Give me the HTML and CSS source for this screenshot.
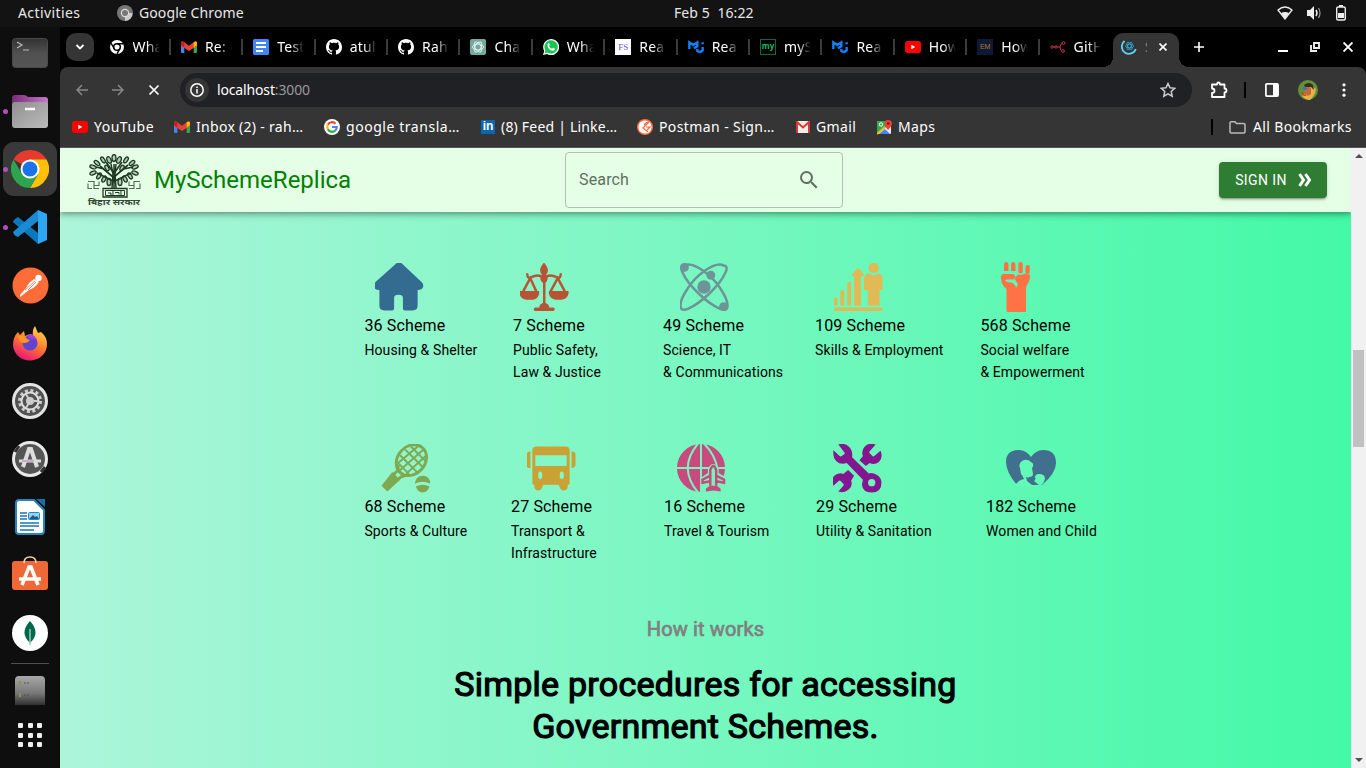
FILE: index.html
```html
<!DOCTYPE html>
<html lang="en">
<head>
<meta charset="utf-8">
<title>MySchemeReplica</title>
<link rel="stylesheet" href="styles.css">
</head>
<body>
<svg class="defs" width="0" height="0">
  <defs>
    <linearGradient id="term" x1="0" y1="0" x2="0" y2="1"><stop offset="0" stop-color="#323232"/><stop offset=".5" stop-color="#505050"/><stop offset="1" stop-color="#555"/></linearGradient>
    <linearGradient id="files" x1="0" y1="0" x2="1" y2="1"><stop offset="0" stop-color="#8f8f8f"/><stop offset="1" stop-color="#bcbcbc"/></linearGradient>
    <linearGradient id="purple"><stop offset="0" stop-color="#7b2c78"/><stop offset="1" stop-color="#c678cd"/></linearGradient>
    <linearGradient id="fox" x1=".8" y1="0" x2=".3" y2="1"><stop offset="0" stop-color="#ffe14c"/><stop offset=".5" stop-color="#ff7b2e"/><stop offset="1" stop-color="#e6127b"/></linearGradient>
    <linearGradient id="drive" x1="0" y1="0" x2="0" y2="1"><stop offset="0" stop-color="#a8a8a8"/><stop offset=".6" stop-color="#777"/><stop offset="1" stop-color="#303030"/></linearGradient>
    <symbol id="gmail" viewBox="0 0 24 18"><path d="M0 3v13q0 2 2 2h3V7z" fill="#4285f4"/><path d="M24 3v13q0 2-2 2h-3V7z" fill="#34a853"/><path d="M0 2.500Q1-1 4 1l8 6 8-6q3-2 4 1.500V7L12 15 0 7z" fill="#ea4335"/><path d="M19 1.700Q24-1 24 3v3l-5 4z" fill="#fbbc04"/><path d="M5 1.700Q0-1 0 3v3l5 4z" fill="#c5221f"/></symbol>
    <symbol id="youtube" viewBox="0 0 24 18"><rect width="24" height="18" rx="4" fill="#f00"/><path d="M9.500 5.500v7l6-3.500z" fill="#fff"/></symbol>
    <symbol id="github" viewBox="0 0 16 16"><path fill="#fff" d="M8 0C3.580 0 0 3.580 0 8c0 3.540 2.290 6.530 5.470 7.590.4.070.55-.17.55-.38 0-.19-.01-.82-.01-1.490-2.010.37-2.530-.49-2.690-.94-.09-.23-.48-.94-.82-1.130-.28-.15-.68-.52-.01-.53.63-.01 1.080.58 1.230.82.72 1.210 1.870.87 2.330.66.07-.52.28-.87.51-1.070-1.780-.2-3.640-.89-3.640-3.950 0-.87.31-1.590.82-2.150-.08-.2-.36-1.020.08-2.120 0 0 .67-.21 2.200.82.64-.18 1.320-.27 2-.27s1.360.09 2 .27c1.530-1.040 2.200-.82 2.200-.82.44 1.100.16 1.920.08 2.120.51.56.82 1.270.82 2.150 0 3.070-1.870 3.750-3.650 3.950.29.25.54.73.54 1.480 0 1.070-.01 1.930-.01 2.200 0 .21.15.46.55.38A8 8 0 0 0 16 8c0-4.420-3.580-8-8-8z"/></symbol>
    <symbol id="mui" viewBox="0 0 24 20"><path d="M2 13V3l6 4 6-4v6l-5 3M14 13v3q4 3 8-1v-5M22 3v3" fill="none" stroke="#0a84ff" stroke-width="3.500"/></symbol>
    <symbol id="chrome" viewBox="0 0 48 48"><path d="M24 24 3.200 12A24 24 0 0 1 44.800 12z" fill="#e33b2e"/><path d="M24 12H44.800A24 24 0 0 1 24 48l10.400-18z" fill="#ffc107"/><path d="M13.600 30 3.200 12A24 24 0 0 0 24 48l10.400-18z" fill="#2da44e"/><circle cx="24" cy="24" r="12" fill="#fff"/><circle cx="24" cy="24" r="9.500" fill="#1a73e8"/></symbol>
  </defs>
</svg>

<header class="topbar">
  <span class="activities">Activities</span>
  <svg class="app-icon" width="16" height="16" viewBox="0 0 16 16"><circle cx="8" cy="8" r="8" fill="#777"/><path d="M8 8h7.500A8 8 0 0 1 8 16z" fill="#ccc"/><circle cx="8" cy="8" r="4.200" fill="#ddd"/><circle cx="8" cy="8" r="3" fill="#777"/></svg>
  <span class="app-name">Google Chrome</span>
  <span class="clock">Feb 5&nbsp; 16:22</span>
  <span class="status">
    <svg width="16" height="14" viewBox="0 0 16 14"><path d="M1 4Q8-2 15 4L8 13z" fill="none" stroke="#eee" stroke-width="1.300"/><path d="M4 7q4-2 8 0l-4 6z" fill="#eee"/></svg>
    <svg width="16" height="14" viewBox="0 0 16 14"><path d="M1 4h3l4-4v14l-4-4H1z" fill="#eee"/><path d="M10 4q2 3 0 6" fill="none" stroke="#eee" stroke-width="1.500"/><path d="M12.500 2q3 5 0 10" fill="none" stroke="#999" stroke-width="1.200"/></svg>
    <svg width="12" height="16" viewBox="0 0 12 16"><path d="M4 0h4v2H4z" fill="#eee"/><rect x="1.700" y="2" width="8.600" height="13" rx="1.500" fill="none" stroke="#eee" stroke-width="1.400"/><path d="M3 8h6v5H3z" fill="#eee"/></svg>
  </span>
</header>

<div class="desktop">
  <nav class="dock">
    <span class="dock-item"><svg width="36" height="30" viewBox="0 0 36 30"><rect x=".5" y=".5" width="35" height="29" rx="3" fill="url(#term)" stroke="#4a4a4a"/><path d="m5 4 5 3-5 3M11 12h6" fill="none" stroke="#bbb" stroke-width="1.200"/></svg></span>
    <span class="dock-item running"><svg width="36" height="33" viewBox="0 0 36 33"><path d="M0 3q0-3 3-3h9q2 0 4 2h17q3 0 3 3v8H0z" fill="url(#purple)"/><rect y="7" width="36" height="26" rx="3" fill="url(#files)"/><path d="M13 14h10" stroke="#fff" stroke-width="2.500"/></svg></span>
    <span class="dock-item running active"><svg width="38" height="38"><use href="#chrome"/></svg></span>
    <span class="dock-item running"><svg width="34" height="34" viewBox="0 0 34 34"><path d="M5 7 25 23v11L0 12q0-2 5-5z" fill="#0b78bd"/><path d="M25 0v11L5 27q-4-1-5-5z" fill="#1b8ad3"/><path d="m25 0 9 4v26l-9 4z" fill="#2da6f3"/></svg></span>
    <span class="dock-item"><svg width="37" height="37" viewBox="0 0 37 37"><circle cx="18.500" cy="18.500" r="18" fill="#ff6c37"/><circle cx="26.500" cy="11" r="3.200" fill="#fff"/><path d="m22 12 5 3q-4 6-10 8l-5 4-4 3v-2l6-7q3-6 8-9z" fill="#fff"/><path d="m13 23 10-9M16 23l8-8" stroke="#ff6c37" stroke-width=".8"/></svg></span>
    <span class="dock-item"><svg width="36" height="36" viewBox="0 0 36 36"><path d="M6 7 8 10l4-4 1 5q5-3 8-1-1-5 2-9l3 7 3-1q6 5 6 12a17 16 0 0 1-34 1Q1 12 6 7z" fill="url(#fox)"/><circle cx="18" cy="18" r="7.500" fill="#6044d0"/><path d="M6 11q7-1 9 3l3 1q-2 3-6 3-5 0-6-7z" fill="#ff9620"/><path d="M15 10q7-2 10 5-5-2-7-1z" fill="#a43ce8"/></svg></span>
    <span class="dock-item"><svg width="36" height="36" viewBox="0 0 36 36"><circle cx="18" cy="18" r="16.500" fill="#525252" stroke="#e4e4e4" stroke-width="3"/><circle cx="18" cy="18" r="10.500" fill="none" stroke="#ccc" stroke-width="3" stroke-dasharray="3 2.500"/><circle cx="18" cy="18" r="8.500" fill="none" stroke="#ddd" stroke-width="2"/><circle cx="18" cy="18" r="4" fill="#ccc"/><path d="m18 18-4-7m4 7h8m-8 0-4 7" stroke="#ccc" stroke-width="2"/></svg></span>
    <span class="dock-item"><svg width="36" height="36" viewBox="0 0 36 36"><circle cx="18" cy="18" r="16.500" fill="#555" stroke="#e9e9e9" stroke-width="3"/><path d="m3 11 4-6M29 31l4-5" stroke="#333" stroke-width="3"/><path d="m11 26 6-18h2l6 18" fill="none" stroke="#ddd" stroke-width="4"/><path d="M7 20h22" stroke="#ddd" stroke-width="3"/><path d="M10 20h12" stroke="#b87ab8"/></svg></span>
    <span class="dock-item"><svg width="30" height="36" viewBox="0 0 30 36"><path d="M4 1h15l10 10v21q0 3-3 3H4q-3 0-3-3V4q0-3 3-3z" fill="#fff" stroke="#2485bf" stroke-width="2"/><path d="M21 0h9v8z" fill="#1b6fa8"/><path d="M5 14h7M5 17h7M5 20h7M5 24h19M5 27h19M5 31h14" stroke="#1b75b5" stroke-width="1.300"/><rect x="13.500" y="13.500" width="11" height="7" rx="1" fill="#9bd0ef" stroke="#2485bf"/><path d="m14 20 4-4 2 2 2-1 2 3z" fill="#175c8e"/></svg></span>
    <span class="dock-item store"><svg width="36" height="34" viewBox="0 0 36 34"><rect y="5" width="36" height="29" rx="3" fill="#ee6936"/><path d="M12 7q0-6 6-6t6 6" fill="none" stroke="#efd6a5" stroke-width="1.600"/><path d="m10 29 7-18h2l7 18" fill="none" stroke="#fff" stroke-width="3.500"/><path d="M7 23h22" stroke="#fff" stroke-width="3.500"/></svg></span>
    <span class="dock-item"><svg width="36" height="36" viewBox="0 0 36 36"><circle cx="18" cy="18" r="18" fill="#fff"/><path d="M18 6q11 12 0 22-11-10 0-22z" fill="#00684a"/><path d="M18 14v16" stroke="#9cc5b5" stroke-width="1.500"/></svg></span>
    <span class="dock-rule"></span>
    <svg class="dock-drive" width="30" height="29" viewBox="0 0 30 29"><path d="M0 29V4q0-4 4-4h22q4 0 4 4v25z" fill="url(#drive)"/><path d="M9 7h1.500M12 7h1.500M9 19h1.500M12 19h1.500" stroke="#444"/><path d="M5 5v4M5 17v4" stroke="#84954d" stroke-width="2"/></svg>
    <span class="dock-grid"><i></i><i></i><i></i><i></i><i></i><i></i><i></i><i></i><i></i></span>
  </nav>

  <main class="browser">
    <div class="tabstrip">
      <span class="tab-search"><svg width="10" height="8" viewBox="0 0 10 8"><path d="m1.500 2 3.500 3.500L8.500 2" fill="none" stroke="#fff" stroke-width="1.800"/></svg></span>
      <div class="tabs">
        <span class="tab"><svg width="16" height="16" viewBox="0 0 16 16"><circle cx="8" cy="8" r="7" fill="#fff"/><circle cx="8" cy="8" r="3.300" fill="#fff" stroke="#000" stroke-width="1.500"/><path d="M8 4.700h6.500M5.200 9.700 2 4M10.800 9.700 8 15" stroke="#000" stroke-width="1.400"/></svg><b>Wha</b></span>
        <span class="tab"><svg width="16" height="12"><use href="#gmail"/></svg><b>Re: N</b></span>
        <span class="tab"><svg width="16" height="16" viewBox="0 0 16 16"><rect width="16" height="16" rx="1.500" fill="#4285f4"/><path d="M3 4h10M3 8h10M3 12h7" stroke="#fff" stroke-width="1.800"/></svg><b>Test</b></span>
        <span class="tab"><svg width="16" height="16"><use href="#github"/></svg><b>atul</b></span>
        <span class="tab"><svg width="16" height="16"><use href="#github"/></svg><b>Rah</b></span>
        <span class="tab"><svg width="16" height="16" viewBox="0 0 16 16"><rect width="16" height="16" rx="2" fill="#74aa9c"/><g fill="none" stroke="#e6f4ef" stroke-width=".9"><ellipse cx="8" cy="8" rx="5.500" ry="3"/><ellipse cx="8" cy="8" rx="5.500" ry="3" transform="rotate(60 8 8)"/><ellipse cx="8" cy="8" rx="5.500" ry="3" transform="rotate(120 8 8)"/></g></svg><b>Cha</b></span>
        <span class="tab"><svg width="16" height="16" viewBox="0 0 16 16"><path d="M0 16 1.200 12A8 8 0 1 1 4 14.900z" fill="#fff"/><path d="m1.500 14.500.9-3a6.700 6.700 0 1 1 2.100 2.100z" fill="#1bc553"/><path d="M5 4.500q1-1.200 1.500.5l.3 1-.8 1q1 2 3 2.800l1-1 2 1q0 2-2.300 2Q5 11 4.500 6z" fill="#fff"/></svg><b>Wha</b></span>
        <span class="tab"><i class="fav fav-fs">FS</i><b>Rea</b></span>
        <span class="tab"><svg width="16" height="14"><use href="#mui"/></svg><b>Rea</b></span>
        <span class="tab"><i class="fav fav-my">my</i><b>myS</b></span>
        <span class="tab"><svg width="16" height="14"><use href="#mui"/></svg><b>Rea</b></span>
        <span class="tab"><svg width="16" height="12"><use href="#youtube"/></svg><b>How</b></span>
        <span class="tab"><i class="fav fav-em">EM</i><b>How</b></span>
        <span class="tab last"><svg width="16" height="14" viewBox="0 0 16 14"><path d="M1 7h9m0 0q0-4 4-4m-4 4q0 4 3 4" fill="none" stroke="#c4304f"/><g fill="#000" stroke="#c4304f"><circle cx="2" cy="7" r="1.200"/><circle cx="6" cy="7" r="1.200"/><circle cx="13.500" cy="3" r="1.400"/><circle cx="13" cy="11" r="1.400"/></g></svg><b>GitH</b></span>
      </div>
      <div class="tab-active">
        <svg width="16" height="16" viewBox="0 0 16 16"><path d="M3.500 2A7.200 7.200 0 1 0 14.800 10" fill="none" stroke="#5ed3f3" stroke-width="1.800"/><circle cx="8.500" cy="7" r="4.500" fill="#16435a"/><g fill="none" stroke="#4aa9c6" stroke-width=".7"><ellipse cx="8.500" cy="7" rx="4.200" ry="1.800"/><ellipse cx="8.500" cy="7" rx="4.200" ry="1.800" transform="rotate(60 8.500 7)"/><ellipse cx="8.500" cy="7" rx="4.200" ry="1.800" transform="rotate(120 8.500 7)"/></g></svg>
        <b class="sliver">S</b>
        <svg width="8" height="8" viewBox="0 0 8 8"><path d="m.5.5 7 7m0-7-7 7" stroke="#fff" stroke-width="1.600"/></svg>
      </div>
      <svg class="new-tab" width="10" height="10" viewBox="0 0 10 10"><path d="M5 0v10M0 5h10" stroke="#fff" stroke-width="1.600"/></svg>
      <span class="window-controls">
        <svg width="10" height="10" viewBox="0 0 10 10"><path d="M0 9h10" stroke="#fff" stroke-width="2"/></svg>
        <svg width="10" height="10" viewBox="0 0 10 10"><path d="M4 1h5v5H4zM1 3v6h6" fill="none" stroke="#eee" stroke-width="1.900"/></svg>
        <svg width="10" height="10" viewBox="0 0 10 10"><path d="m.5.500 9 9m0-9-9 9" stroke="#fff" stroke-width="1.900"/></svg>
      </span>
    </div>

    <div class="toolbar">
      <svg class="nav-icon" width="12" height="12" viewBox="0 0 12 12"><path d="M12 6H1m5-5L1 6l5 5" fill="none" stroke="#888" stroke-width="1.500"/></svg>
      <svg class="nav-icon" width="12" height="12" viewBox="0 0 12 12"><path d="M0 6h11M6 1l5 5-5 5" fill="none" stroke="#888" stroke-width="1.500"/></svg>
      <svg class="nav-icon" width="12" height="12" viewBox="0 0 12 12"><path d="m1.500 1.500 9 9m0-9-9 9" stroke="#fff" stroke-width="1.700"/></svg>
      <div class="omnibox">
        <span class="site-info"><svg width="14" height="14" viewBox="0 0 14 14"><circle cx="7" cy="7" r="6.200" fill="none" stroke="#fff" stroke-width="1.500"/><path d="M7 6v4.500M7 3.500V5" stroke="#fff" stroke-width="1.500"/></svg></span>
        <span class="url">localhost<em>:3000</em></span>
        <svg width="16" height="16" viewBox="0 0 16 16"><path d="m8 1.500 2 4.300 4.700.5-3.500 3.200 1 4.700L8 11.800l-4.200 2.400 1-4.700L1.300 6.300 6 5.800z" fill="none" stroke="#ccc" stroke-width="1.500"/></svg>
      </div>
      <svg class="ext" width="18" height="18" viewBox="0 0 18 18"><path d="M2 3.500h5q0-2 1.500-2t1.500 2h4.500v4q2 0 2 2t-2 2v4.500H2V12q2.500 0 2.500-2.200T2 7.500z" fill="none" stroke="#fff" stroke-width="1.800" stroke-linejoin="round"/></svg>
      <span class="divider"></span>
      <svg class="panel" width="14" height="14" viewBox="0 0 14 14"><rect x=".9" y=".9" width="12.200" height="12.200" rx="1" fill="none" stroke="#fff" stroke-width="1.700"/><path d="M8 1h5v12H8z" fill="#fff"/></svg>
      <svg class="avatar" width="20" height="20" viewBox="0 0 20 20"><circle cx="10" cy="10" r="10" fill="#5e9435"/><path d="M4 16q5-3 5-6l5-4 4 3q-1 7-6 11-5 0-8-4z" fill="#e7b048"/><path d="M6 5q5-4 9 0l1 5-3-3H7z" fill="#3e2a22"/><path d="m7 7 6 1v6l-3 2-4-3z" fill="#bf6a3c"/><path d="m5 8 4 1" stroke="#3f67d8" stroke-width="2"/><path d="M4 12q1 4 4 3" stroke="#e3372a" stroke-width="1.500" fill="none"/></svg>
      <svg class="kebab" width="4" height="14" viewBox="0 0 4 14"><g fill="#fff"><circle cx="2" cy="1.800" r="1.600"/><circle cx="2" cy="7" r="1.600"/><circle cx="2" cy="12.200" r="1.600"/></g></svg>
    </div>

    <div class="bookmarks">
      <span class="bm bm-yt"><svg width="16" height="12"><use href="#youtube"/></svg><b>YouTube</b></span>
      <span class="bm bm-in"><svg width="16" height="12"><use href="#gmail"/></svg><b>Inbox (2) - rah…</b></span>
      <span class="bm bm-gt"><svg width="16" height="16" viewBox="0 0 16 16"><circle cx="8" cy="8" r="8" fill="#fff"/><g fill="none" stroke-width="2.200"><path d="M11.500 4.700A4.800 4.800 0 0 0 3.800 5.800" stroke="#ea4335"/><path d="M3.800 5.800a4.800 4.800 0 0 0 0 4.400" stroke="#fbbc05"/><path d="M3.800 10.200a4.800 4.800 0 0 0 7.400 1.400" stroke="#34a853"/><path d="M11.200 11.600A4.800 4.800 0 0 0 12.800 8H8" stroke="#4285f4"/></g></svg><b>google transla…</b></span>
      <span class="bm bm-li"><i class="fav-in">in</i><b>(8) Feed | Linke…</b></span>
      <span class="bm bm-pm"><svg width="16" height="16" viewBox="0 0 16 16"><circle cx="8" cy="8" r="7.300" fill="#fff" stroke="#ff6c37" stroke-width="1.400"/><path d="M12 3 6 9l5 4M12 3q-3 0-5 3M9 8l4 0-3 3" fill="none" stroke="#f26b3a" stroke-width="1.200"/></svg><b>Postman - Sign…</b></span>
      <span class="bm bm-gm"><svg width="14" height="12" viewBox="0 0 14 12"><rect width="14" height="12" rx="1" fill="#eee"/><path d="M1 12V1l6 5.500L13 1v11" fill="none" stroke="#d93a30" stroke-width="2"/></svg><b>Gmail</b></span>
      <span class="bm bm-mp"><svg width="15" height="15" viewBox="0 0 15 15"><rect y="1" width="14" height="13" rx="1" fill="#e8eaed"/><path d="M0 2q0-1 1-1h8v6L1 14H0z" fill="#34a853"/><path d="m0 14 8-7" stroke="#fbbc04" stroke-width="2"/><path d="m2 14 6-5 5 5z" fill="#4285f4"/><circle cx="4" cy="4.500" r="1.700" fill="none" stroke="#fff"/><path d="M11 0q4 0 4 3.500Q15 6 11 10 7.500 6 7.500 3.500 7.500 0 11 0z" fill="#ea4335"/><circle cx="11.200" cy="3.500" r="1.300" fill="#811"/></svg><b>Maps</b></span>
      <span class="divider bm-divider"></span>
      <span class="bm bm-all"><svg width="17" height="13" viewBox="0 0 17 13"><path d="M1 2q0-1.200 1.200-1.200H6L7.500 2.500h7.300Q16 2.500 16 3.700v7.100q0 1.200-1.200 1.200H2.200Q1 12 1 10.800z" fill="none" stroke="#bbb" stroke-width="1.500"/></svg><b>All Bookmarks</b></span>
    </div>

    <div class="viewport">
      <div class="page">
        <header class="site-header">
          <svg class="emblem" width="54" height="52" viewBox="0 0 54 52">
            <g fill="none" stroke="#1d3a20" stroke-width="1.300">
              <path d="M25 34 26 20 24 10M29 34 28 20l1-10M27 34V10" stroke-width="1.500"/>
              <path d="M26 23 13 12M27 23l14-12M26 27 10 19M28 27l16-8M26 18l-7-10M28 18l7-10M17 15 9 13M37 15l9-2" stroke-width="1.700"/>
              <g fill="#1d3a2040"><ellipse cx="27" cy="4" rx="2" ry="3.500"/><ellipse cx="22" cy="6" rx="2" ry="3.500" transform="rotate(-25 22 6)"/><ellipse cx="32" cy="6" rx="2" ry="3.500" transform="rotate(25 32 6)"/><ellipse cx="16" cy="6" rx="1.700" ry="3.300" transform="rotate(-35 16 6)"/><ellipse cx="39" cy="6" rx="1.700" ry="3.300" transform="rotate(35 39 6)"/><ellipse cx="10" cy="9" rx="1.700" ry="3.300" transform="rotate(-50 10 9)"/><ellipse cx="45" cy="9" rx="1.700" ry="3.300" transform="rotate(50 45 9)"/><ellipse cx="6" cy="13" rx="1.700" ry="3.300" transform="rotate(-70 6 13)"/><ellipse cx="48" cy="13" rx="1.700" ry="3.300" transform="rotate(70 48 13)"/><ellipse cx="6" cy="19" rx="1.700" ry="3.300" transform="rotate(70 6 19)"/><ellipse cx="48" cy="19" rx="1.700" ry="3.300" transform="rotate(-70 48 19)"/><ellipse cx="12" cy="22" rx="1.700" ry="3.300" transform="rotate(35 12 22)"/><ellipse cx="43" cy="22" rx="1.700" ry="3.300" transform="rotate(-35 43 22)"/><ellipse cx="17" cy="25" rx="1.700" ry="3.300" transform="rotate(30 17 25)"/><ellipse cx="38" cy="25" rx="1.700" ry="3.300" transform="rotate(-30 38 25)"/><ellipse cx="20" cy="14" rx="1.700" ry="3" transform="rotate(-30 20 14)"/><ellipse cx="35" cy="14" rx="1.700" ry="3" transform="rotate(30 35 14)"/><ellipse cx="22" cy="28" rx="2" ry="3.700"/><ellipse cx="33" cy="28" rx="2" ry="3.700"/></g>
              <path d="M16 34.500h24v8.500H16z" stroke-width="1.300"/>
              <path d="M18.500 36.500h19v5h-19zM21 39h3v2M26 37v4M28 38.500h4v2M34 37v4" stroke-width="1"/>
              <path d="M1 27.500h6v4h5v-4M12 34.500H7v-3M1 29.500v5h4M53 27.500h-6v4h-5v-4M42 34.500h5v-3M53 29.500v5h-4" stroke-width="1.100" opacity=".75"/>
            </g>
            <text x="1" y="50.500" textLength="52" lengthAdjust="spacingAndGlyphs" class="emblem-text">बिहार सरकार</text>
          </svg>
          <span class="brand">MySchemeReplica</span>
          <div class="search"><span>Search</span><svg width="24" height="24" viewBox="0 0 24 24"><path fill="#5f6f60" d="M15.500 14h-.79l-.28-.27A6.470 6.470 0 0 0 16 9.500 6.500 6.500 0 1 0 9.500 16c1.610 0 3.090-.59 4.230-1.570l.27.28v.79l5 4.990L20.490 19zm-6 0C7.010 14 5 11.990 5 9.500S7.010 5 9.500 5 14 7.010 14 9.500 11.990 14 9.500 14"/></svg></div>
          <button class="signin">SIGN IN<svg width="14" height="14" viewBox="0 0 14 14"><path d="m1.500 1 4 6-4 6M7.500 1l4 6-4 6" fill="none" stroke="#fff" stroke-width="3"/></svg></button>
        </header>

        <section class="schemes">
          <div class="row row-one">
            <article><svg viewBox="0 0 50 50"><path fill="#336b91" d="M21 2q4-4 8 0l19 18q3 3 1 6-1 2-5 2v16q0 5-5 5h-8q-2 0-2-2V36q0-3-4.500-3T20 36v11q0 2-2 2h-8q-5 0-5-5V28q-4 0-5-2-1-3 1-6z"/></svg><h3>36 Scheme</h3><p>Housing &amp; Shelter</p></article>
            <article><svg viewBox="0 0 50 50"><g fill="#b95336"><path d="M25 0q4 5 4 8 0 3-2 4 3 2 1 7l-1.500 2v20l3 2 1 3h4q1.500 0 1.500 1.700T34 49.500H16q-1.500 0-1.500-1.500t1.500-2h4l1-3 3-2V21l-2-2q-2-5 1-7-2-1-2-4 0-3 4-8z"/><path d="M0 29h20v3q-1 5-6 6H7q-6-1-7-6zM30 29h20v3q-1 5-7 6h-6q-6-1-7-6z"/></g><path d="M8 12q0 5 4 3 6-3 10-1M42 12q0 5-4 3-6-3-10-1M11 16 4 29M11 16l6 13M39 16l-7 13M39 16l7 13" fill="none" stroke="#b95336" stroke-width="2.500" stroke-linecap="round"/></svg><h3>7 Scheme</h3><p>Public Safety,<br>Law &amp; Justice</p></article>
            <article><svg viewBox="0 0 50 50"><g fill="none" stroke="#6d9496" stroke-width="2.500"><path d="M5 3C14-2 34 14 42 27 52 42 51 52 41 47 29 42 9 24 3 10 1 6 2 3 5 3z"/><path d="M45 3C36-2 16 14 8 27-2 42-1 52 9 47 21 42 41 24 47 10 49 6 48 3 45 3z"/></g><g fill="#6d9496"><circle cx="25" cy="25" r="6.800"/><circle cx="5" cy="5" r="4.500"/><circle cx="32" cy="13" r="4.500"/><circle cx="45" cy="45" r="4.500"/></g></svg><h3>49 Scheme</h3><p>Science, IT<br>&amp; Communications</p></article>
            <article><svg viewBox="0 0 50 50"><g fill="#e1ba56"><rect y="46" width="50" height="3.500" rx="1.700"/><path d="M.500 36H4v8H.500zM7 29q2-2 4 0v15H7zM14 21q2-2 4 0v23h-4zM21 44V14h-2q-1-1 0-2l5-6q1-1 2 0l5 6q0 2-2 2h-1v30z"/><circle cx="41" cy="5.500" r="5.300"/><path d="m35 11 6 2.500 6-2.500q3 2 3 6v11h-3v16H35V28h-4V17q1-5 4-6z"/></g></svg><h3>109 Scheme</h3><p>Skills &amp; Employment</p></article>
            <article><svg viewBox="0 0 50 50"><g fill="#ff7245"><path d="M13 9V3q0-3 2.300-3 2.200 0 2.200 3v6zM20 9V3q0-3 2.200-3 2.300 0 2.300 3v6z"/><rect x="27.300" y="0" width="4.500" height="11.500" rx="2.200"/><rect x="34.500" y="3" width="4.300" height="9" rx="2.100"/><path d="M13 12h9q3 1 2 4-1 2-5 1.500-4-.5-5 1 2 2 5 2 4 0 6 5 3-2 1-5l-2-3q0-3 3-5l3 .5 4.500-1.500 4.500 1.500q0 6-3 10l-1 2v24q0 1-1 1H17q-1.500 0-1.500-1V27q-6-5-5.500-12 0-3 3-3z"/></g></svg><h3>568 Scheme</h3><p>Social welfare<br>&amp; Empowerment</p></article>
          </div>
          <div class="row row-two">
            <article><svg viewBox="0 0 50 50"><g fill="none" stroke="#7fa950"><ellipse cx="30.500" cy="17" rx="17" ry="14" transform="rotate(-48 30.500 17)" stroke-width="3"/><path d="m19 12 17 17M24 6l18 18M30 3l15 15M17 20l11 11M17 20 37 3M18 28 44 5M25 31 46 12" stroke-width="2"/><path d="M17 22v5l-5 5M27 32l-7 2-5 4" stroke-width="3"/></g><path d="m11 29 8 8L6 49 0 43z" fill="#7fa950"/><path d="M34 41q1-8 8-8t8 8q-8-4-16 0zM35 44q7-4 14 0-2 6-7 6t-7-6z" fill="#7fa950"/></svg><h3>68 Scheme</h3><p>Sports &amp; Culture</p></article>
            <article><svg viewBox="0 0 50 50"><g fill="#caa135"><path fill-rule="evenodd" d="M10 3h30q4 0 4 4v34q0 1-2 1v3q-1 3-4 3t-4-3l-1-3H17l-1 3q-1 3-4 3t-4-3v-3q-2 0-2-1V7q0-4 4-4zM9 12v11h32V12zM12 30v5q2 3 4 0v-5q-2-3-4 0zM34 30v5q2 3 4 0v-5q-2-3-4 0z"/><path d="M4 8v17H2q-2-1-2-3V11q0-2 4-3zM46 8v17h1q3-1 3-3V11q0-2-4-3z"/></g></svg><h3>27 Scheme</h3><p>Transport &amp;<br>Infrastructure</p></article>
            <article><svg viewBox="0 0 50 50"><circle cx="25" cy="25" r="24.500" fill="#c94a7d"/><path d="M0 25h50M25 0v50M22 0q-21 25 0 50M28 0q12 12 14 27" fill="none" stroke="#77f6c1" stroke-width="2"/><path d="M25 51V35l7-5v-4q5-10 11 0v4l8 5v16z" fill="#75f6bf"/><path d="M34.500 43V27q3-8 6 0v16M34 33l-7.500 4v3l8-1.500M41 33l7.500 4v3l-8-1.500" fill="none" stroke="#c94a7d" stroke-width="2.500"/><path d="M30 49v-3l4-3h7l4 3v3l-7-1z" fill="#c94a7d"/></svg><h3>16 Scheme</h3><p>Travel &amp; Tourism</p></article>
            <article><svg viewBox="0 0 50 50"><g fill="#84178f"><path d="M6 1q6-2 10.500 2T20 14l17 16.500q4-1 8 1.500 5 3 5 8 0 10-10 10-9 0-10-8l1-5L14.500 20Q8 22 4 18T1 7l6 5.500q1 1 2 .5l3-2q1-1 0-2z"/><path d="m44 1-6 7q-1 1 0 2l3 3q1 .5 2-.5l6-5q3 7-1.500 11T38 20l-4 3-6.500-6L31 13q-2-6 2-10t11-2zM6 49l5-6q1-1 0-2l-3-3q-1-.5-2 .5l-5 4.500q-3-7 1.500-10.500T11 31l5-4 6 6-3 5q2 5-2.500 9T6 49z"/></g><circle cx="40" cy="40" r="3.700" fill="#70f6bc"/></svg><h3>29 Scheme</h3><p>Utility &amp; Sanitation</p></article>
            <article><svg viewBox="0 0 50 50"><path d="M25 14Q30 7 37 7q13 0 13 13 0 10-14 22H11Q0 29 0 19 0 7 13 7q7 0 12 7z" fill="#40708e"/><path d="M9 43q3-6 9-7-1-3-3-5l-1-6q-2-4 2-7 5-3 9 1 4 2 1 6l1 6q0 3-4 3l-1 2q3 4 7 1-1-6 4-6 6 0 6 5-1 4-4 6v1z" fill="#63f9b7"/><path d="m20 34 3 1 7 0-2 3 5 4h-7l-5-4z" fill="#40708e"/></svg><h3>182 Scheme</h3><p>Women and Child</p></article>
          </div>
        </section>

        <section class="how">
          <h2>How it works</h2>
          <h1>Simple procedures for accessing<br>Government Schemes.</h1>
        </section>
      </div>
      <aside class="scrollbar"><i class="up"></i><i class="thumb"></i><i class="down"></i></aside>
    </div>
  </main>
</div>
</body>
</html>
```
FILE: styles.css
```css
* { box-sizing: border-box; }
body { margin: 0; width: 1366px; height: 768px; overflow: hidden; background: #0e0e0e; font-family: "Noto Sans", "Open Sans", sans-serif; color: #fff; }
svg { display: block; flex: none; }
.defs { position: absolute; }
b, i, em { font-weight: 400; font-style: normal; }

.topbar { display: flex; align-items: center; height: 27px; background: #131313; font-size: 14px; color: #e8e8e8; padding: 0 18px 1px; line-height: 26px; white-space: nowrap; }
.activities { width: 99px; letter-spacing: .4px; }
.app-name { margin-left: 6px; width: 535px; letter-spacing: .1px; }
.clock { width: 603px; letter-spacing: .1px; }
.status { display: flex; align-items: center; gap: 13px; }

.desktop { display: flex; height: 741px; }
.dock { width: 60px; display: flex; flex-direction: column; align-items: center; background: #0e0e0e; flex: none; }
.dock-item { position: relative; width: 54px; height: 54px; margin-bottom: 4px; display: flex; align-items: center; justify-content: center; border-radius: 11px; flex: none; }
.dock-item:first-child { margin-top: -1px; }
.dock-item.active { background: #393939; }
.dock-item.store { padding-bottom: 4px; }
.dock-item.running::before { content: ""; position: absolute; left: 3px; top: 25px; width: 5px; height: 5px; margin-left: -3px; border-radius: 50%; background: #b44fb8; }
.dock-rule { width: 38px; height: 1px; background: #505050; margin: -1px 0 12px; flex: none; }
.dock-drive { margin-bottom: 18px; }
.dock-grid { display: grid; grid-template-columns: repeat(3, 5px); gap: 4.500px; }
.dock-grid i { height: 5px; background: #eee; border-radius: 1px; }

.browser { flex: 1; display: flex; flex-direction: column; background: #000; min-width: 0; }
.tabstrip { height: 40px; display: flex; align-items: center; background: #000; font-size: 14px; }
.tab-search { width: 28px; height: 28px; margin-left: 6px; border-radius: 10px; background: #353535; display: flex; align-items: center; justify-content: center; flex: none; }
.tabs { display: flex; margin-left: 4.500px; flex: none; }
.tab { width: 72.400px; height: 16px; padding-left: 10px; display: flex; align-items: center; border-right: 2px solid #3c3c3c; flex: none; }
.tab.last { border-color: transparent; }
.tab b { width: 27px; margin-left: 8px; letter-spacing: .2px; overflow: hidden; white-space: nowrap; line-height: 20px; -webkit-mask-image: linear-gradient(90deg, #000 50%, transparent); mask-image: linear-gradient(90deg, #000 50%, transparent); }
.fav { width: 16px; height: 16px; line-height: 15px; text-align: center; flex: none; }
.fav-fs { background: #fff; color: #6357dc; font: 9px/16px "Liberation Serif", serif; }
.fav-my { border: 1px solid #0b6b3d; color: #18b862; font-size: 8px; line-height: 11px; font-weight: 700; }
.fav-em { background: #0e1a33; color: #b3772a; font: 7px/16px "Liberation Sans", sans-serif; }
.tab-active { position: relative; width: 66px; height: 34px; margin: 6px 0 0 1px; padding: 0 12px 6px 8px; border-radius: 10px 10px 0 0; background: #353535; display: flex; align-items: center; flex: none; }
.tab-active::before, .tab-active::after { content: ""; position: absolute; bottom: 0; width: 10px; height: 10px; }
.tab-active::before { left: -10px; background: radial-gradient(circle at 0 0, transparent 10px, #353535 10px); }
.tab-active::after { right: -10px; background: radial-gradient(circle at 100% 0, transparent 10px, #353535 10px); }
.sliver { width: 2px; margin: 0 12px 0 8px; overflow: hidden; color: #888; line-height: 20px; }
.new-tab { margin-left: 15px; }
.window-controls { display: flex; gap: 22.500px; margin-left: 74px; }

.toolbar { height: 46px; background: #353535; border-radius: 8px 8px 0 0; display: flex; align-items: center; padding-left: 16px; }
.nav-icon { margin-right: 24px; }
.omnibox { width: 1012px; height: 34px; margin-left: -4px; border-radius: 17px; background: #202124; display: flex; align-items: center; padding: 0 16px 0 5px; }
.site-info { width: 24px; height: 24px; border-radius: 50%; background: #353535; display: flex; align-items: center; justify-content: center; }
.url { margin: -2px 0 0 8px; flex: 1; font-size: 14px; letter-spacing: -.15px; }
.url em { color: #999; }
.ext { margin-left: 18px; }
.divider { width: 2px; height: 16px; background: #000; margin: 0 19px 0 16px; }
.avatar { margin-left: 19px; }
.kebab { margin-left: 24px; }

.bookmarks { height: 35px; background: #353535; border-bottom: 1px solid #555; display: flex; align-items: center; padding: 0 0 6px 12px; font-size: 14px; white-space: nowrap; letter-spacing: .4px; }
.bm { display: flex; align-items: center; flex: none; }
.bm b { margin-left: 6px; line-height: 20px; }
.bm-yt { width: 102px; letter-spacing: .5px; }
.bm-in { width: 150px; letter-spacing: .3px; }
.bm-gt { width: 157px; letter-spacing: .55px; }
.bm-li { width: 156px; letter-spacing: .2px; }
.bm-pm { width: 159px; }
.bm-gm { width: 81px; }
.bm-mp { width: 334px; }
.bm-all b { margin-left: 7px; letter-spacing: .35px; }
.bm-all svg { margin-left: -1px; }
.bm-divider { margin: 0 17px 0 0; }
.fav-in { width: 14px; height: 14px; background: #0a66b0; font: bold 12px/13px "Liberation Sans", sans-serif; letter-spacing: 0; text-align: center; }

.viewport { flex: 1; display: flex; min-height: 0; }
.page { flex: 1; background: linear-gradient(90deg, #acf5da, #43f9a7); color: #000; font-family: Roboto, sans-serif; overflow: hidden; }
.site-header { height: 64px; background: #e4ffe6; display: flex; align-items: center; padding: 0 24px 0 27px; box-shadow: 0 2px 4px -1px rgba(0,0,0,.2), 0 4px 5px rgba(0,0,0,.14), 0 1px 10px rgba(0,0,0,.12); }
.emblem-text { font: 700 8px "Noto Sans", sans-serif; fill: #344a36; }
.brand { margin-left: 13px; width: 411px; color: #008000; font-size: 24px; }
.search { width: 278px; height: 56px; border: 1px solid #aec4b0; border-radius: 4px; display: flex; align-items: center; justify-content: space-between; padding: 0 21px 0 13px; color: #5f6f60; font-size: 16px; letter-spacing: .15px; }
.search span { margin-top: -2px; }
.signin { margin-left: auto; width: 108px; height: 36px; border: 0; border-radius: 4px; background: #2e7d32; color: #fff; font: 14px Roboto, sans-serif; letter-spacing: .4px; display: flex; align-items: center; justify-content: center; gap: 11px; padding: 0 0 0 1px; box-shadow: 0 3px 1px -2px rgba(0,0,0,.2), 0 2px 2px rgba(0,0,0,.14), 0 1px 5px rgba(0,0,0,.12); }

.schemes { padding: 50px 0 0 304.450px; height: 411px; }
.row { display: grid; height: 181px; align-items: start; }
.row-one { grid-template-columns: 148.600px 150px 152px 165.400px 150px; }
.row-two { grid-template-columns: 146.600px 153px 152px 170px 150px; }
article svg { width: 50px; height: 50px; padding: .5px; margin-left: 10px; }
.row-one article:nth-child(2) svg { margin-left: 6px; }
.row-one article:nth-child(3) svg { margin-left: 16px; }
.row-one article:nth-child(4) svg { margin-left: 18px; }
.row-one article:nth-child(5) svg { margin-left: 11px; padding: 0; }
.row-two article:nth-child(1) svg { margin-left: 16.500px; }
.row-two article:nth-child(2) svg { margin-left: 15px; }
.row-two article:nth-child(3) svg { margin-left: 12px; }
.row-two article:nth-child(4) svg { margin-left: 16px; }
.row-two article:nth-child(5) svg { margin-left: 20px; padding: 0; }
h3 { margin: 2px 0 1px; font-size: 16px; font-weight: 400; line-height: 24px; letter-spacing: .15px; }
p { margin: 0; font-size: 14px; line-height: 22px; letter-spacing: .1px; white-space: nowrap; }
.how { text-align: center; }
h2 { margin: -8px 0 0; font-size: 20px; line-height: 28px; font-weight: 400; letter-spacing: .15px; color: #808080; -webkit-text-stroke: .7px #808080; }
h1 { margin: 20px 0 0; font-size: 34px; line-height: 42px; font-weight: 400; letter-spacing: .23px; -webkit-text-stroke: 1.200px #000; }

.scrollbar { width: 15px; background: #f1f1f1; display: flex; flex-direction: column; align-items: center; flex: none; }
.up, .down { width: 0; border: 4px solid transparent; }
.up { border-top: 0; border-bottom-color: #505050; margin-top: 6px; }
.thumb { width: 11px; height: 97px; background: #c1c1c1; margin-top: 192px; }
.down { border-bottom: 0; border-top-color: #505050; margin: auto 0 6px; }
```
